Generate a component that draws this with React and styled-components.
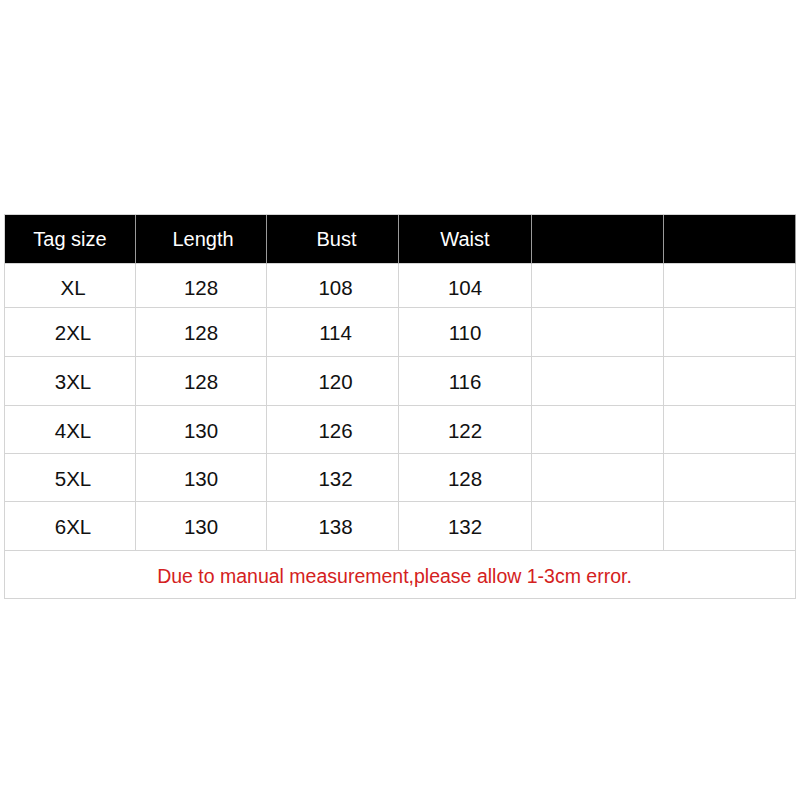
import React from "react";
import styled, { createGlobalStyle } from "styled-components";

const Global = createGlobalStyle`
  html, body { margin: 0; padding: 0; background: #fff; }
  body { font-family: "Liberation Sans", Arial, sans-serif; }
`;

const Page = styled.div`
  width: 800px;
  height: 800px;
  padding: 214px 0 0 4px;
  box-sizing: border-box;
`;

const Table = styled.div`
  display: grid;
  grid-template-columns: 131px 131px 132px 133px 132px 132px;
  grid-template-rows: 49px 44px 49px 49px 48px 48px 49px 48px;
  width: 792px;
  box-sizing: border-box;
  border-top: 1px solid #d4d4d4;
  border-left: 1px solid #d4d4d4;
`;

const Cell = styled.div`
  box-sizing: border-box;
  border-right: 1px solid ${(p) => (p.$head ? "#9a9a9a" : "#d4d4d4")};
  border-bottom: 1px solid #d4d4d4;
  background: ${(p) => (p.$head ? "#000" : "#fff")};
  color: ${(p) => (p.$head ? "#fff" : "#111")};
  font-size: ${(p) => (p.$head ? 20 : 20.5)}px;
  display: flex;
  align-items: center;
  justify-content: center;
  padding-top: ${(p) => p.$pt || 0}px;
  padding-left: ${(p) => p.$pl || 0}px;
`;

const Note = styled.div`
  grid-column: 1 / -1;
  box-sizing: border-box;
  border-right: 1px solid #d4d4d4;
  border-bottom: 1px solid #d4d4d4;
  display: flex;
  align-items: center;
  justify-content: center;
  color: #d42121;
  font-size: 19.5px;
  padding-top: 3px;
  padding-right: 11px;
`;

const headers = ["Tag size", "Length", "Bust", "Waist", "", ""];
const rows = [
  ["XL", "128", "108", "104"],
  ["2XL", "128", "114", "110"],
  ["3XL", "128", "120", "116"],
  ["4XL", "130", "126", "122"],
  ["5XL", "130", "132", "128"],
  ["6XL", "130", "138", "132"],
];
const headShift = [0, 4, 8, -8, 0, 0];
const bodyShift = [6, -2, 6, 0, 0, 0];

export default function App() {
  return (
    <>
      <Global />
      <Page>
        <Table>
          {headers.map((h, i) => (
            <Cell key={"h" + i} $head $pl={headShift[i]}>
              {h}
            </Cell>
          ))}
          {rows.map((r, ri) =>
            [...r, "", ""].map((c, ci) => (
              <Cell key={ri + "-" + ci} $pt={ri === 0 ? 4 : 2} $pl={bodyShift[ci]}>
                {c}
              </Cell>
            ))
          )}
          <Note>Due to manual measurement,please allow 1-3cm error.</Note>
        </Table>
      </Page>
    </>
  );
}
